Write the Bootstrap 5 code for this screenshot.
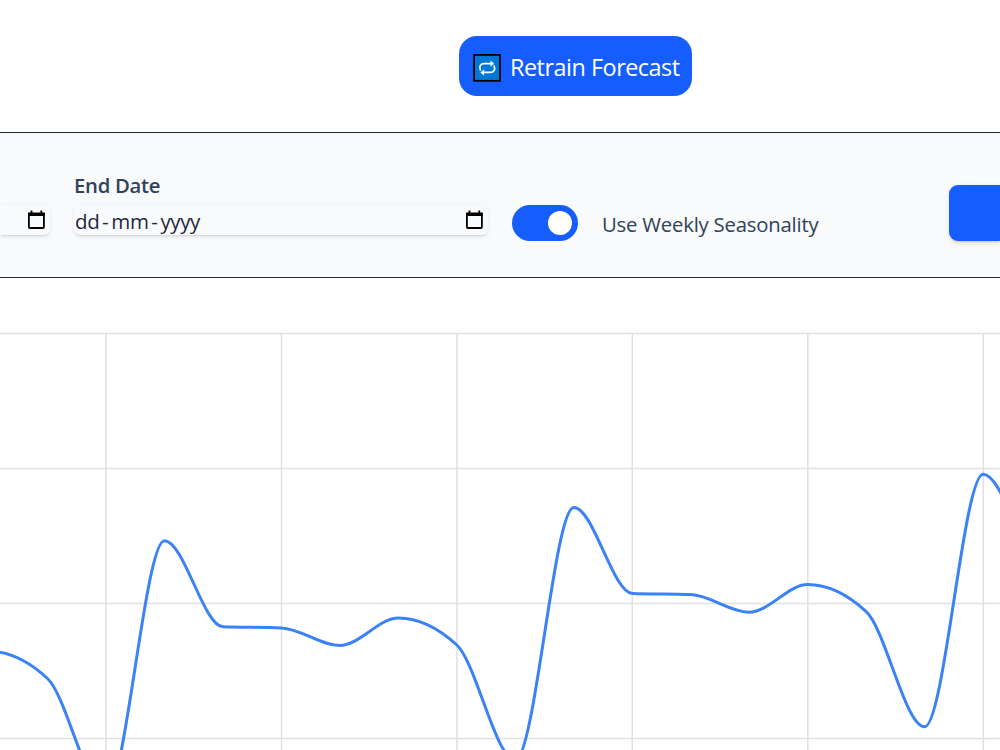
<!DOCTYPE html>
<html lang="en">
<head>
<meta charset="utf-8">
<meta name="viewport" content="width=device-width, initial-scale=1">
<title>Forecast</title>
<link href="https://cdn.jsdelivr.net/npm/bootstrap@5.3.0/dist/css/bootstrap.min.css" rel="stylesheet">
<style>
  body { font-family: "Open Sans", "Noto Sans", sans-serif; height: 750px; overflow: hidden; background: #fff; }
  .page-head { height: 132px; padding: 36px 0 0 459px; }
  .btn-retrain { width: 233px; height: 60px; border: 0; border-radius: 18px; background: #155dfc; color: #fff; font-size: 23.4px; line-height: 36px; padding: 3px 0 0 14px; }
  .btn-retrain:hover { background: #155dfc; color: #fff; }
  .retrain-text { margin: 0 0 2px 9px; letter-spacing: -.48px; }
  .filters { height: 146px; background: #f8fafc; border-top: 1px solid #1d293d; border-bottom: 1px solid #1d293d; }
  .start-date { width: 50px; margin-top: 72px; }
  .end-date { width: 414px; margin: 37px 0 0 24px; }
  .end-label { font-size: 20.3px; line-height: 31px; font-weight: 600; color: #314158; letter-spacing: -.28px; height: 31px; }
  .end-box { margin-top: 4px; }
  .date-box { height: 30px; padding-right: 3px; background: #f9fafb; border-radius: 6px; box-shadow: 0 1.5px 4px rgba(0,0,0,.08), 0 1.5px 2px -1px rgba(0,0,0,.1); color: #1d293d; font-size: 20.5px; line-height: 33px; }
  .date-value { padding-left: 1px; }
  .d-dash { width: 12px; text-align: center; }
  .d-part { letter-spacing: -.4px; }
  .cal { margin-top: 5px; }
  .switch-track { width: 66px; height: 36px; margin: 72px 0 0 24px; padding: 0 6px; border-radius: 18px; background: #155dfc; }
  .switch-knob { width: 24px; height: 24px; background: #fff; }
  .season-text { margin: 76px 0 0 24px; width: 347px; font-size: 20.3px; line-height: 31px; color: #314158; letter-spacing: -.2px; }
  .btn-run { height: 56px; margin-top: 52px; border-radius: 9px 0 0 9px; border: 0; background: #155dfc; box-shadow: 0 1.5px 4px rgba(0,0,0,.12), 0 1.5px 2px -1px rgba(0,0,0,.1); }
</style>
</head>
<body>
<header class="page-head">
  <button type="button" class="btn btn-retrain d-flex align-items-center text-nowrap">
    <svg class="flex-shrink-0" width="28" height="28" viewBox="0 0 28 28" aria-hidden="true">
      <rect x="1.1" y=".9" width="25.9" height="25.9" fill="#0078d7" stroke="#000" stroke-width="1.8"/>
      <g fill="none" stroke="#fff" stroke-width="1.7" stroke-linecap="round" stroke-linejoin="round">
        <path d="M7.3 15.9C5.6 12.3 8 9.7 10.8 9.7H18.6"/>
        <path d="M21.1 12.1C22.8 15.7 20.4 18.4 17.6 18.4H10.2"/>
      </g>
      <path d="M17.5 6.5L21.2 9.7L17.5 12.4ZM11.1 15.4L7.4 18.4L11.1 21.4Z" fill="#fff"/>
    </svg>
    <span class="retrain-text">Retrain Forecast</span>
  </button>
</header>

<section class="filters d-flex align-items-start overflow-hidden">
  <div class="start-date date-box flex-shrink-0 d-flex justify-content-end rounded-start-0">
    <svg width="20" height="20" viewBox="0 0 20 20" class="cal"><path d="M1.9 4V17.2Q1.9 18 2.7 18H16.1Q16.9 18 16.9 17.2V4Z" fill="none" stroke="#000" stroke-width="1.8"/><path d="M1 2.4H17.8V6H1ZM3.6 .4H5.4V3H3.6ZM13.4 .4H15.2V3H13.4Z"/></svg>
  </div>
  <div class="end-date flex-shrink-0">
    <div class="end-label">End Date</div>
    <div class="date-box end-box d-flex justify-content-between">
      <span class="date-value d-flex"><span class="d-part">dd</span><span class="d-dash">-</span><span class="d-part">mm</span><span class="d-dash">-</span><span class="d-part">yyyy</span></span>
      <svg width="20" height="20" viewBox="0 0 20 20" class="cal"><path d="M1.9 4V17.2Q1.9 18 2.7 18H16.1Q16.9 18 16.9 17.2V4Z" fill="none" stroke="#000" stroke-width="1.8"/><path d="M1 2.4H17.8V6H1ZM3.6 .4H5.4V3H3.6ZM13.4 .4H15.2V3H13.4Z"/></svg>
    </div>
  </div>
  <div class="switch-track flex-shrink-0 d-flex align-items-center justify-content-end" role="switch" aria-checked="true" aria-label="Use Weekly Seasonality"><span class="switch-knob rounded-circle"></span></div>
  <div class="season-text flex-shrink-0 text-nowrap">Use Weekly Seasonality</div>
  <button type="button" class="btn btn-run flex-grow-1" aria-label="Run"></button>
</section>

<main>
  <svg id="chart" class="d-block" width="1000" height="472" viewBox="0 278 1000 472" aria-label="Forecast chart">
    <g stroke="#e0e0e0" stroke-width="1.5">
      <path d="M0 333.5H1000M0 468.5H1000M0 603.5H1000M0 738.5H1000"/>
      <path d="M106 333.5V750M281.5 333.5V750M457 333.5V750M632.3 333.5V750M807.8 333.5V750M983.3 333.5V750"/>
    </g>
    <path id="series" fill="none" stroke="#3b82f6" stroke-width="3"/>
  </svg>
</main>
<script src="https://cdn.jsdelivr.net/npm/bootstrap@5.3.0/dist/js/bootstrap.bundle.min.js"></script>
<script>
  // Monotone cubic line through evenly spaced daily values
  const step = 58.48, x0 = -11;
  const ys = [651.3, 678.5, 793.5, 540.7, 626.8, 627.9, 645.5, 617.9, 645, 760, 507.4, 593.5, 594.6, 612.2, 584.6, 611.7, 726.7, 474.2, 560.2];
  const slope = i => {
    if (i === 0 || i === ys.length - 1) return 0;
    const a = (ys[i] - ys[i - 1]) / step, b = (ys[i + 1] - ys[i]) / step;
    return (Math.sign(a) + Math.sign(b)) * Math.min(Math.abs(a), Math.abs(b), Math.abs(a + b) / 4);
  };
  let d = `M${x0} ${ys[0]}`;
  for (let i = 1; i < ys.length; i++) {
    const xa = x0 + (i - 1) * step, xb = xa + step, t = step / 3;
    d += `C${xa + t} ${ys[i - 1] + slope(i - 1) * t} ${xb - t} ${ys[i] - slope(i) * t} ${xb} ${ys[i]}`;
  }
  document.getElementById('series').setAttribute('d', d);
</script>
</body>
</html>
